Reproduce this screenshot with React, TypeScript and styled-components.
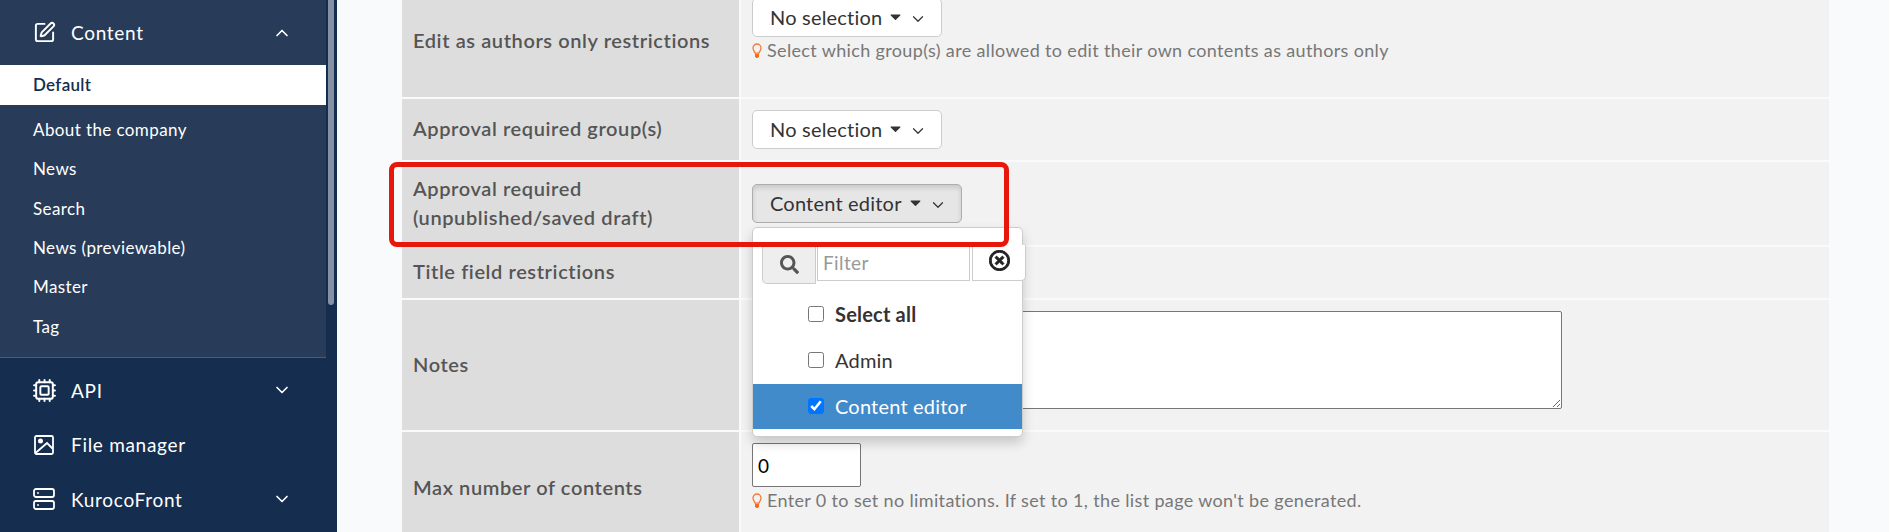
import React from "react";
import styled, { createGlobalStyle } from "styled-components";
import { FaSearch, FaCaretDown, FaRegTimesCircle } from "react-icons/fa";
import { ChevronDown, ChevronUp, Cpu, Server, SquarePen } from "lucide-react";

const GlobalStyle = createGlobalStyle`
  html, body {
    margin: 0;
    height: 532px;
    overflow: hidden;
    background: #f9fafc;
    font-family: "Lato", "Liberation Sans", sans-serif;
  }
`;

const SUB_ITEMS = ["About the company", "News", "Search", "News (previewable)", "Master", "Tag"];

function BulbIcon() {
  return (
    <BulbSvg viewBox="0 0 10 15">
      <path
        d="M3 10.2C2.7 8.6 1 7.6 1 5a4 4 0 0 1 8 0c0 2.6-1.7 3.6-2 5.2z"
        fill="none"
        stroke="#f47a3a"
        strokeWidth="1.3"
      />
      <path d="M3 11h4v2.4L5.8 15H4.2L3 13.4z" fill="#f96a1e" />
    </BulbSvg>
  );
}

function ImageIcon() {
  return (
    <svg width="20" height="20" viewBox="0 0 20 20" fill="none" stroke="currentColor" strokeWidth="1.8">
      <rect x="1" y="1" width="18" height="18" rx="1.5" />
      <circle cx="6.5" cy="6" r="1.6" fill="currentColor" />
      <path d="M1.5 18 13 8l5.5 5.5" />
    </svg>
  );
}

function Hint(props: { children: React.ReactNode }) {
  return (
    <HintText>
      <BulbIcon />
      {props.children}
    </HintText>
  );
}

function SelectButton(props: { label: string; open?: boolean }) {
  return (
    <Multi $open={props.open}>
      {props.label}
      <FaCaretDown size={17} />
      <Chevron size={18} strokeWidth={1.6} />
    </Multi>
  );
}

export default function App() {
  return (
    <Page>
      <GlobalStyle />
      <Sidebar>
        <Expanded>
          <NavHead $tall={65}>
            <NavIcon>
              <SquarePen size={23} strokeWidth={2} />
            </NavIcon>
            <NavLabel>Content</NavLabel>
            <ChevronUp size={20} />
          </NavHead>
          <ActiveItem>Default</ActiveItem>
          <SubList>
            {SUB_ITEMS.map((item) => (
              <SubItem key={item}>{item}</SubItem>
            ))}
          </SubList>
        </Expanded>
        <NavHead $tall={54.5} $first>
          <NavIcon>
            <Cpu size={25} strokeWidth={1.9} />
          </NavIcon>
          <NavLabel>API</NavLabel>
          <ChevronDown size={20} />
        </NavHead>
        <NavHead $tall={54.5}>
          <NavIcon>
            <ImageIcon />
          </NavIcon>
          <NavLabel>File manager</NavLabel>
        </NavHead>
        <NavHead $tall={54.5}>
          <NavIcon>
            <Server size={24} strokeWidth={1.8} />
          </NavIcon>
          <NavLabel>KurocoFront</NavLabel>
          <ChevronDown size={20} />
        </NavHead>
        <ScrollThumb />
      </Sidebar>
      <Main>
        <Row $h={112}>
          <Label>Edit as authors only restrictions</Label>
          <Value $pad={13}>
            <SelectButton label="No selection" />
            <Hint>Select which group(s) are allowed to edit their own contents as authors only</Hint>
          </Value>
        </Row>
        <Row $h={61}>
          <Label>Approval required group(s)</Label>
          <Value $center>
            <SelectButton label="No selection" />
          </Value>
        </Row>
        <Row $h={83}>
          <Label>
            Approval required
            <br />
            (unpublished/saved draft)
          </Label>
          <Value $center>
            <DropWrap>
              <SelectButton label="Content editor" open />
              <Dropdown>
                <FilterRow>
                  <FilterAddon>
                    <FaSearch size={19} />
                  </FilterAddon>
                  <FilterInput placeholder="Filter" readOnly />
                  <FilterClear>
                    <FaRegTimesCircle size={21} stroke="currentColor" strokeWidth={24} />
                  </FilterClear>
                </FilterRow>
                <Option $bold>
                  <Check type="checkbox" readOnly />
                  Select all
                </Option>
                <Option>
                  <Check type="checkbox" readOnly />
                  Admin
                </Option>
                <Option $selected>
                  <Check type="checkbox" checked readOnly />
                  Content editor
                </Option>
              </Dropdown>
            </DropWrap>
          </Value>
          <RedMark />
        </Row>
        <Row $h={51}>
          <Label>Title field restrictions</Label>
          <Value />
        </Row>
        <Row $h={130}>
          <Label>Notes</Label>
          <Value $pad={11}>
            <Notes />
          </Value>
        </Row>
        <Row $h={113}>
          <Label>Max number of contents</Label>
          <Value $pad={11}>
            <NumberInput type="text" value="0" readOnly />
            <Hint>Enter 0 to set no limitations. If set to 1, the list page won't be generated.</Hint>
          </Value>
        </Row>
      </Main>
    </Page>
  );
}

const Page = styled.div`
  display: flex;
  height: 532px;
  overflow: hidden;
`;

const Sidebar = styled.nav`
  position: relative;
  flex: 0 0 337px;
  padding-right: 11px;
  box-sizing: border-box;
  background: #152d4e;
  color: #fff;
`;

const ScrollThumb = styled.div`
  position: absolute;
  top: 0;
  right: 3px;
  width: 6px;
  height: 305px;
  border-radius: 0 0 3px 3px;
  background: #8592a6;
`;

const Expanded = styled.div`
  background: #283c59;
  border-bottom: 1px solid #4a5b75;
  height: 358px;
  box-sizing: border-box;
`;

const NavHead = styled.div<{ $tall: number; $first?: boolean }>`
  display: flex;
  align-items: center;
  height: ${(p) => p.$tall}px;
  margin-top: ${(p) => (p.$first ? "5px" : "0")};
  padding: 0 34px 0 31px;
`;

const NavIcon = styled.span`
  display: flex;
  align-items: center;
  justify-content: center;
  flex: 0 0 26px;
`;

const NavLabel = styled.span`
  flex: 1;
  margin-left: 14px;
  font-size: 19px;
  letter-spacing: 0.7px;
`;

const ActiveItem = styled.div`
  display: flex;
  align-items: center;
  height: 40px;
  box-sizing: border-box;
  padding: 0 0 2px 33px;
  background: #fff;
  color: #152d4e;
  font-size: 17px;
  font-weight: 600;
  letter-spacing: 0.3px;
`;

const SubList = styled.div`
  padding-top: 5px;
`;

const SubItem = styled.div`
  display: flex;
  align-items: center;
  height: 39.3px;
  padding-left: 33px;
  font-size: 17px;
  letter-spacing: 0.4px;
`;

const Main = styled.main`
  flex: 1;
  margin: -15px 60px 0 65px;
  display: flex;
  flex-direction: column;
  gap: 2px;
`;

const Row = styled.div<{ $h: number }>`
  position: relative;
  display: grid;
  grid-template-columns: 337px 1fr;
  column-gap: 2px;
  flex: 0 0 ${(p) => p.$h}px;
`;

const Label = styled.div`
  display: flex;
  align-items: center;
  padding: 0 0 2px 11px;
  background: #dddddd;
  color: #555;
  font-size: 20px;
  font-weight: 600;
  letter-spacing: 0.6px;
  line-height: 29px;
`;

const Value = styled.div<{ $center?: boolean; $pad?: number }>`
  display: flex;
  flex-direction: column;
  align-items: flex-start;
  justify-content: ${(p) => (p.$center ? "center" : "flex-start")};
  padding: ${(p) => p.$pad ?? 0}px 11px 0;
  background: #f2f2f2;
`;

const Multi = styled.div<{ $open?: boolean }>`
  display: inline-flex;
  align-items: center;
  gap: 5px;
  height: 39px;
  box-sizing: border-box;
  padding: 0 14px 2px 17px;
  border: 1px solid ${(p) => (p.$open ? "#adadad" : "#ccc")};
  border-radius: 5px;
  background: ${(p) => (p.$open ? "#e6e6e6" : "#fff")};
  box-shadow: ${(p) => (p.$open ? "inset 0 3px 5px rgba(0, 0, 0, 0.125)" : "none")};
  color: #333;
  font-size: 20px;
  letter-spacing: 0.2px;
`;

const Chevron = styled(ChevronDown)`
  margin-top: 4px;
`;

const HintText = styled.div`
  display: flex;
  align-items: center;
  gap: 5px;
  margin-top: 2px;
  color: #777;
  font-size: 18px;
  letter-spacing: 0.35px;
`;

const BulbSvg = styled.svg`
  flex: 0 0 10px;
  width: 10px;
  height: 15px;
`;

const DropWrap = styled.div`
  position: relative;
`;

const Dropdown = styled.div`
  position: absolute;
  top: calc(100% + 4px);
  left: 0;
  z-index: 2;
  width: 271px;
  height: 210px;
  box-sizing: border-box;
  padding-top: 17px;
  border: 1px solid #ccc;
  border-radius: 5px;
  background: #fff;
  box-shadow: 0 6px 12px rgba(0, 0, 0, 0.175);
`;

const FilterRow = styled.div`
  display: flex;
  align-items: flex-start;
  margin: 0 -3px 8px 9px;
`;

const FilterAddon = styled.div`
  display: flex;
  align-items: center;
  justify-content: center;
  flex: 0 0 54px;
  height: 39px;
  box-sizing: border-box;
  border: 1px solid #ccc;
  border-top: none;
  border-radius: 0 0 0 5px;
  background: #eee;
  color: #555;
`;

const FilterInput = styled.input`
  flex: 0 0 153px;
  width: 153px;
  height: 36px;
  box-sizing: border-box;
  margin-left: 1px;
  padding: 0 5px;
  border: 1px solid #ccc;
  border-top: none;
  outline: none;
  font: 19px "Lato", sans-serif;
  letter-spacing: 0.4px;

  &::placeholder {
    color: #999;
  }
`;

const FilterClear = styled.div`
  display: flex;
  justify-content: center;
  flex: 0 0 54px;
  height: 36px;
  box-sizing: border-box;
  margin-left: 2px;
  padding-top: 5px;
  border: 1px solid #ccc;
  border-top: none;
  border-radius: 0 0 5px 0;
  background: #fff;
  color: #222;
`;

const Option = styled.label<{ $bold?: boolean; $selected?: boolean }>`
  display: flex;
  align-items: center;
  height: 45px;
  box-sizing: border-box;
  margin-bottom: 1px;
  padding: 0 0 2px 55px;
  background: ${(p) => (p.$selected ? "#428bca" : "transparent")};
  color: ${(p) => (p.$selected ? "#fff" : "#333")};
  font-size: 20px;
  font-weight: ${(p) => (p.$bold ? 700 : 400)};
  letter-spacing: 0.2px;
`;

const Check = styled.input`
  width: 16px;
  height: 16px;
  margin: 0 11px 0 0;
`;

const RedMark = styled.div`
  position: absolute;
  z-index: 3;
  top: 0;
  bottom: -2px;
  left: -13px;
  width: 620px;
  box-sizing: border-box;
  border: 5px solid #e8170c;
  border-radius: 8px;
  pointer-events: none;
`;

const Notes = styled.textarea`
  width: 810px;
  height: 98px;
  box-sizing: border-box;
  margin: 0;
  border: 1px solid #767676;
  border-radius: 2px;
  background: #fff;
`;

const NumberInput = styled.input`
  width: 109px;
  height: 44px;
  box-sizing: border-box;
  padding: 0 5px;
  border: 1px solid #767676;
  border-radius: 2px;
  font: 19px "Lato", sans-serif;
`;
